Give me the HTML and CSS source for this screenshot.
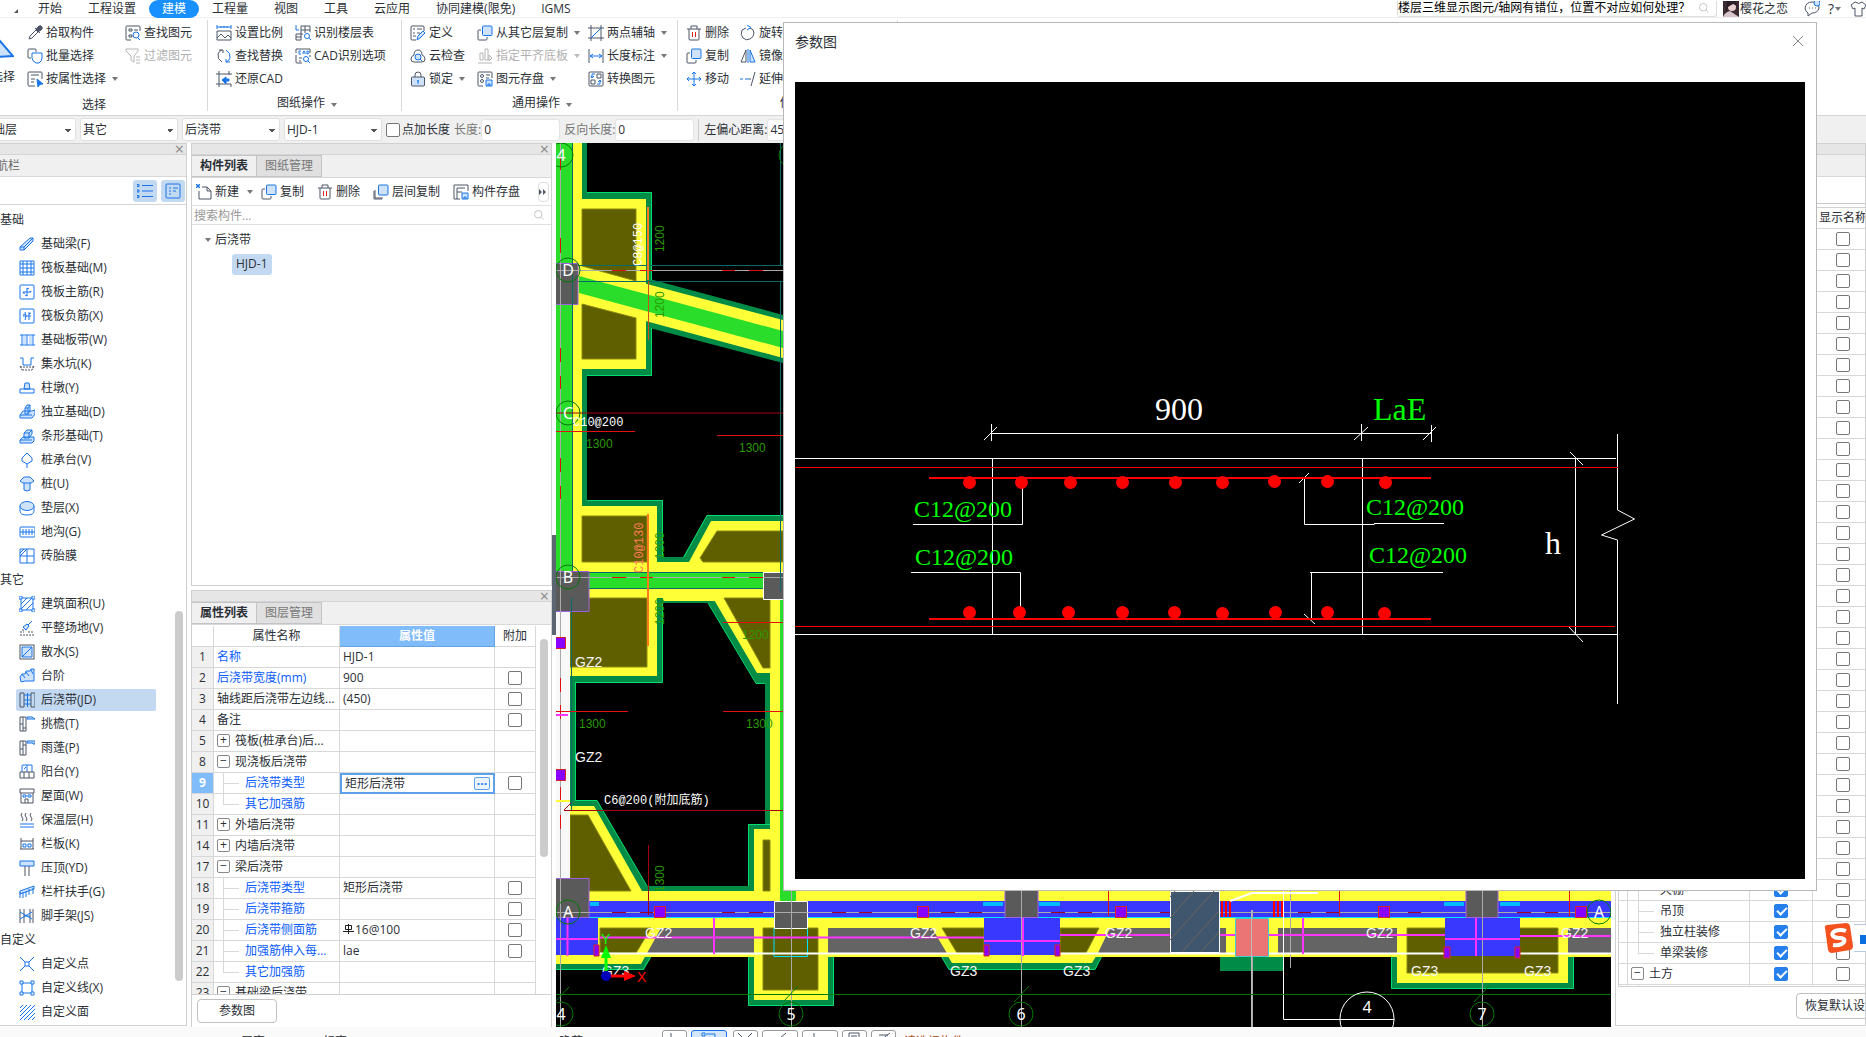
FILE: index.html
```html
<!DOCTYPE html>
<html lang="zh-CN">
<head>
  <meta charset="UTF-8">
  <title>参数图</title>
  <link rel="stylesheet" href="styles.css">
</head>
<body>
  <!-- icon sprite -->
  <svg class="sprite" aria-hidden="true">
    <symbol id="i-pick" viewBox="0 0 16 16"><path class="k" d="M2 14l1-3 6-6 2 2-6 6zM8 3l5 5" /><path class="kf" d="M9 4l3-3q2-1 3 1t-1 3l-3 2z"/></symbol>
    <symbol id="i-batch" viewBox="0 0 16 16"><path class="k" d="M9 4V2q0-1-1-1H2Q1 1 1 2v7q0 1 1 1h2"/><path d="M9 15q-4-2-4-5V5h10v5q0 3-3 5z"/></symbol>
    <symbol id="i-attr" viewBox="0 0 16 16"><path class="k" d="M15 8V2q0-1-1-1H2Q1 1 1 2v12q0 1 1 1h6M4 4h8M4 8h4M4 11h3"/><path class="b" d="M10 8l6 5-3 .3L11 16z"/></symbol>
    <symbol id="i-find" viewBox="0 0 16 16"><path class="k" d="M15 6V2q0-1-1-1H2Q1 1 1 2v12q0 1 1 1h4M4 4h3v2H4zM4 10h3v2H4zM9 5h4"/><circle cx="11" cy="10" r="3"/><path d="M13 13l2 2"/></symbol>
    <symbol id="i-filter" viewBox="0 0 16 16"><path class="g" d="M1 1h12v2L9 8v6l-3-2V8L1 3zM11 9h4M11 12h4M11 15h4"/></symbol>
    <symbol id="i-scale" viewBox="0 0 16 16"><path d="M1 0v4M15 0v4M1 2h14M5 1v2M8 1v2M11 1v2"/><path class="k" d="M1 6h14v9H1zM1 13l4-4 4 4 3-3 3 3"/></symbol>
    <symbol id="i-floor" viewBox="0 0 16 16"><path d="M1 0v5h3"/><path class="k" d="M6 1h9v6M6 1v14H1V9h7M10 1v7M6 5h9M1 12h5"/><circle cx="12" cy="11" r="2.5"/><path d="M14 13l2 2"/></symbol>
    <symbol id="i-replace" viewBox="0 0 16 16"><path class="k" d="M6 14Q1 11 2 6q1-3 4-4M3 2h4v3"/><path d="M10 2q5 3 4 8-1 3-4 4M14 14h-4v-3"/></symbol>
    <symbol id="i-cadopt" viewBox="0 0 16 16"><path class="k" d="M1 7v7q0 1 1 1h5M15 7v2M4 10h3M4 13h2M1 5V1h14v4"/><path d="M6 3H4v3h2M8 6V4l1-1 1 1v2M12 3v3q2 0 2-1.500T12 3"/><circle cx="11" cy="11" r="2.500"/><path d="M13 13l2 2"/></symbol>
    <symbol id="i-cad" viewBox="0 0 16 16"><path class="k" d="M3 0v16M0 3h16M13 0v4M0 13h15v3"/><path class="b" d="M6 9l4-3v2h3v2h-3v3z"/></symbol>
    <symbol id="i-define" viewBox="0 0 16 16"><path class="k" d="M14 6V2q0-1-1-1H2Q1 1 1 2v12q0 1 1 1h4M3 4h2M7 4h5M3 8h2M7 8h3M3 11h3"/><path class="f" d="M7 15l1-4 5-5 2 2-5 5z"/></symbol>
    <symbol id="i-cloud" viewBox="0 0 16 16"><path class="k" d="M4 14q-3 0-3-3t3-4q0-5 4-5t4 5q3 1 3 4t-3 3z"/><circle class="f" cx="8" cy="9" r="3"/><path d="M10 11l2 2"/></symbol>
    <symbol id="i-lock" viewBox="0 0 16 16"><path class="k" d="M5 6V4q0-3 3-3t3 3v2"/><rect class="k f" x="1.500" y="6" width="13" height="9" rx="1"/><path d="M8 9v4M7 10h2"/></symbol>
    <symbol id="i-copy" viewBox="0 0 16 16"><path class="k" d="M4 5H2Q1 5 1 6v8q0 1 1 1h7q1 0 1-1v-2"/><rect class="f" x="5.500" y="1" width="9.500" height="9.500" rx="1"/></symbol>
    <symbol id="i-align" viewBox="0 0 16 16"><path class="g" d="M1 15h14M3 5h3v7H3zM8 1h3v11H8zM12 7l3 3-3 3z"/></symbol>
    <symbol id="i-store" viewBox="0 0 16 16"><path class="k" d="M15 7V2q0-1-1-1H2Q1 1 1 2v12q0 1 1 1h4M9 4h4M9 7h3"/><circle class="k" cx="5" cy="5" r="1.500"/><circle class="k" cx="5" cy="10" r="1.500"/><path class="f" d="M9 9h6v6H9zM11 15v-2h2v2"/></symbol>
    <symbol id="i-axis" viewBox="0 0 16 16"><path class="k" d="M3 0v16M13 0v16M0 3h16M0 13h16"/><path d="M3 13L13 3"/></symbol>
    <symbol id="i-dim" viewBox="0 0 16 16"><path class="k" d="M1 1v14M15 1v14"/><path d="M2 8h12M5 6L2 8l3 2M11 6l3 2-3 2"/></symbol>
    <symbol id="i-conv" viewBox="0 0 16 16"><rect class="k" x="1" y="1" width="14" height="14" rx="1"/><path class="k" d="M9 3h4v4H9zM3 9h4v4H3z"/><path d="M7 3H4v4M3 5l1 2 2-2M9 13h3V9M10 11l2-2 1 2"/></symbol>
    <symbol id="i-del" viewBox="0 0 16 16"><path class="k" d="M1 4h14M5 4V1h6v3M3 4v10q0 1 1 1h8q1 0 1-1V4"/><path class="r" d="M6.500 7v5M9.500 7v5"/></symbol>
    <symbol id="i-move" viewBox="0 0 16 16"><path d="M8 1v14M1 8h14M6 3l2-2 2 2M6 13l2 2 2-2M3 6L1 8l2 2M13 6l2 2-2 2"/></symbol>
    <symbol id="i-rot" viewBox="0 0 16 16"><path class="k" d="M10 3q4 1 4 5t-4 6-7-1-1-8l4-2"/><path d="M7 0l4 2.500L7 5"/></symbol>
    <symbol id="i-mirror" viewBox="0 0 16 16"><path class="k" d="M6 2v12H1z"/><path class="f" d="M10 2v12h5zM8 1v14"/></symbol>
    <symbol id="i-extend" viewBox="0 0 16 16"><path d="M0 8h3M5 8h4"/><path class="k" d="M9 8h2M15 1l-4 14"/></symbol>
    <symbol id="i-new" viewBox="0 0 16 16"><path class="k" d="M6 3h5l4 4v8H3V7M11 3v4h4"/><path d="M0 0l4 4M4 0L0 4M2 0v4M0 2h4"/></symbol>
    <symbol id="i-layers" viewBox="0 0 16 16"><path class="k" d="M2 6v8h8M1 7v8h8"/><rect class="f" x="5.500" y="1" width="9.500" height="10" rx="1"/></symbol>
    <symbol id="i-save" viewBox="0 0 16 16"><path class="k" d="M15 7V1H1v14h6M4 15V4h8M4 8h5"/><path class="f" d="M9 9h6v6H9zM11 15v-2h2v2"/></symbol>
    <symbol id="i-mag" viewBox="0 0 16 16"><circle class="g" cx="7" cy="7" r="5"/><path class="g" d="M11 11l3 3"/></symbol>
    <symbol id="i-list" viewBox="0 0 16 16"><path d="M5 2.500h11M5 8h11M5 13.500h11M0 1.500h2v2H0zM0 7h2v2H0zM0 12.500h2v2H0z"/></symbol>
    <symbol id="i-card" viewBox="0 0 16 16"><rect x="1" y="1" width="14" height="14" rx="1"/><path d="M4 5h2M8 5h5M4 8h2M8 8h3M4 11h2"/></symbol>

    <symbol id="n-beam" viewBox="0 0 16 16"><path class="f" d="M1 11L11 2l3 0v3L5 14H1zM1 11h4v3M5 11l9-9"/></symbol>
    <symbol id="n-raft" viewBox="0 0 16 16"><path d="M1 1h14v14H1zM4 1v14M8 1v14M12 1v14M1 4h14M1 8h14M1 12h14"/></symbol>
    <symbol id="n-main" viewBox="0 0 16 16"><rect x="1" y="1" width="14" height="14" rx="1"/><path d="M8 4v8M4 8h8M10 5q-2-2-2 0M4 8q0 2 2 1M12 8q0-2-1 0M6 11q2 2 2 0"/></symbol>
    <symbol id="n-neg" viewBox="0 0 16 16"><rect x="1" y="1" width="14" height="14" rx="1"/><path d="M4 8h8M6 4q2 4 0 8M10 4v8M6 6L4 7M10 6l2-1"/></symbol>
    <symbol id="n-strip" viewBox="0 0 16 16"><path d="M1 3h15M1 13h15M3 3v10M8 3v10M14 3v10"/><path class="f" d="M4 4h3v8H4zM10 4h3v8h-3z" stroke="none"/></symbol>
    <symbol id="n-pit" viewBox="0 0 16 16"><path d="M1 2h3v7h8V2h3"/><path class="k" stroke-dasharray="2 1" d="M1 11h15M3 14h10M1 10l2 4M15 10l-2 4"/></symbol>
    <symbol id="n-pier" viewBox="0 0 16 16"><path class="f" d="M6 3h4l1 6H5z"/><path d="M1 9h14v4H1z"/></symbol>
    <symbol id="n-iso" viewBox="0 0 16 16"><path class="f" d="M1 11l3-4h9l3-1v4l-3 4H1zM1 11h12M6 10V4l2-3h3v6l-2 3zM6 4h3v6M9 4l2-3"/></symbol>
    <symbol id="n-bar" viewBox="0 0 16 16"><path class="f" d="M1 12l3-3h11v4l-2 2H1zM1 12h12M5 10V5l3-3h5v4l-3 4zM5 5h5v5M10 5l3-3"/></symbol>
    <symbol id="n-cap" viewBox="0 0 16 16"><path d="M8 1l5 5v3l-5 3-5-3V6zM8 12v4"/></symbol>
    <symbol id="n-pile" viewBox="0 0 16 16"><path class="f" d="M5 7v7q3 2 6 0V7"/><path class="f" d="M1 5l4-4h6l4 4-3 2H4z"/></symbol>
    <symbol id="n-pad" viewBox="0 0 16 16"><path d="M1 6v5q0 4 7 4t7-4V6"/><ellipse class="f" cx="8" cy="6" rx="7" ry="4.500"/></symbol>
    <symbol id="n-ditch" viewBox="0 0 16 16"><rect x="1" y="3" width="15" height="10" rx="1"/><path d="M1 8h15M4 5v6M7 5v6M10 5v6M13 5v6"/></symbol>
    <symbol id="n-brick" viewBox="0 0 16 16"><path d="M1 1h14v14H1zM8 1v14M1 8h14M1 8l7-7M1 5l4-4"/></symbol>
    <symbol id="n-area" viewBox="0 0 16 16"><path d="M2 2h12v12H2zM2 8l6-6M2 13L13 2M7 14l7-7"/><path class="w" d="M0 0h3v3H0zM13 0h3v3h-3zM0 13h3v3H0zM13 13h3v3h-3z"/></symbol>
    <symbol id="n-level" viewBox="0 0 16 16"><path class="f" d="M4 7l3 3 3-4-2-2zM9 5l4-4"/><path class="k" stroke-dasharray="2 1" d="M1 12h4M3 10h2M1 15h14M9 12h5"/></symbol>
    <symbol id="n-apron" viewBox="0 0 16 16"><rect class="k" x="1" y="1" width="14" height="14"/><path class="f" d="M3 3h10v10H3zM3 13L13 3"/></symbol>
    <symbol id="n-step" viewBox="0 0 16 16"><path class="f" d="M1 9l2-3h3l1-3h4l1-2h3v12H6l-4 1zM3 6l3 4M7 4l3 4M12 2l2 4"/></symbol>
    <symbol id="n-post" viewBox="0 0 16 16"><path class="k" d="M1 1h4v14H1zM12 1h4v14h-4z"/><path d="M5 3h7M5 8h7M5 12h7M8.500 1v14"/></symbol>
    <symbol id="n-eave" viewBox="0 0 16 16"><path class="k" d="M1 1h6v14H1zM4 1v14M1 8h3M4 12h3"/><path class="f" d="M8 1h5l3 2H8z"/></symbol>
    <symbol id="n-canopy" viewBox="0 0 16 16"><path class="k" d="M1 1h6v14H1zM4 1v14M1 9h3M4 5h3"/><path class="f" d="M8 1h8v3h-2V3H8z"/></symbol>
    <symbol id="n-balcony" viewBox="0 0 16 16"><path d="M3 8V2q0-1 1-1h9v7M8 1v7M5 5l2-2"/><path class="k" d="M1 8h14v6H1zM5 8v6M10 8v6"/></symbol>
    <symbol id="n-roof" viewBox="0 0 16 16"><path class="k" d="M1 1h14v4H1zM2 5v10h12V5M6 15v-4h3v4"/><path d="M4 7h3v2H4zM9 7h3v2H9z"/></symbol>
    <symbol id="n-heat" viewBox="0 0 16 16"><path class="k" d="M3 1q-2 2 0 4t0 4M7 1q-2 2 0 4t0 4M12 1q-2 2 0 4t0 4"/><path d="M1 12h14M1 15h14"/></symbol>
    <symbol id="n-rail" viewBox="0 0 16 16"><path class="k" d="M2 2v11M14 2v11M2 5h12M1 13h14"/><path d="M4 8h3v3H4zM9 8h3v3H9z"/></symbol>
    <symbol id="n-top" viewBox="0 0 16 16"><path class="f" d="M1 1h14v5H1z"/><path class="k" d="M6 6v10M10 6v10"/></symbol>
    <symbol id="n-hand" viewBox="0 0 16 16"><path class="f" d="M1 7l14-5v3L1 10zM1 8v6M4 8v6M7 7v6M10 5v6M14 4v6"/></symbol>
    <symbol id="n-scaf" viewBox="0 0 16 16"><path class="k" d="M1 1v14M5 1v14M11 1v14M14 1v14"/><path d="M1 4l12 7M1 11l12-7M5 8h6"/></symbol>
    <symbol id="n-pt" viewBox="0 0 16 16"><path d="M1 1l5 5M15 1l-5 5M1 15l5-5M15 15l-5-5M6 6h4v4H6z"/></symbol>
    <symbol id="n-line" viewBox="0 0 16 16"><path d="M3 3h10v10H3z"/><path class="w" d="M1 1h3v3H1zM12 1h3v3h-3zM1 12h3v3H1zM12 12h3v3h-3z"/></symbol>
    <symbol id="n-face" viewBox="0 0 16 16"><path d="M1 4l3-3M1 8l7-7M1 12L12 1M1 16L16 1M5 16L16 5M9 16l7-7M13 16l3-3"/></symbol>
  </svg>

  <header class="menu">
    <span class="corner"></span>
    <nav class="menu-items">
      <a href="#">开始</a><a href="#">工程设置</a><a href="#" class="active">建模</a><a href="#">工程量</a><a href="#">视图</a><a href="#">工具</a><a href="#">云应用</a><a href="#">协同建模(限免)</a><a href="#">IGMS</a>
    </nav>
    <div class="help-search">
      <input type="text" aria-label="搜索帮助" value="楼层三维显示图元/轴网有错位，位置不对应如何处理？">
      <svg class="ico mag"><use href="#i-mag"/></svg>
    </div>
    <svg class="avatar" viewBox="0 0 16 16"><rect width="16" height="16" fill="#3c2a33"/><circle cx="9" cy="6" r="4" fill="#e8cfd0"/><path d="M0 16q2-5 7-6l9 6z" fill="#d9c4c9"/><path d="M4 0h9l1 5-4-2-5 3-2 6z" fill="#2b1c26"/></svg>
    <a href="#" class="user">樱花之恋</a>
    <button class="flat" aria-label="消息"><svg class="ico"><path class="k" d="M4 12q-3-2-3-5 1-6 7-6 7 0 7 6-1 5-7 5l-4 3z"/><path class="k" d="M5 7h1M8 7h1M11 7h1"/><circle class="f" cx="13" cy="2" r="3"/></svg></button>
    <button class="flat help" aria-label="帮助">?<span class="caret"></span></button>
    <button class="flat" aria-label="皮肤"><svg class="ico"><path class="k" d="M5 1L1 4l2 4 2-1v8h7V7l2 1 2-4-4-3q-3 3-7 0z"/></svg></button>
  </header>

  <div class="ribbon">
    <section class="group g-select">
      <button class="big"><svg class="arrow"><path class="f" d="M-6 18L0 2l13 15z"/></svg><span>选择</span></button>
      <div class="tools">
        <button><svg class="ico"><use href="#i-pick"/></svg>拾取构件</button>
        <button><svg class="ico"><use href="#i-find"/></svg>查找图元</button>
        <button><svg class="ico"><use href="#i-batch"/></svg>批量选择</button>
        <button disabled><svg class="ico"><use href="#i-filter"/></svg>过滤图元</button>
        <button><svg class="ico"><use href="#i-attr"/></svg>按属性选择<span class="caret"></span></button>
      </div>
      <h2>选择</h2>
    </section>
    <section class="group g-draw">
      <div class="tools">
        <button><svg class="ico"><use href="#i-scale"/></svg>设置比例</button>
        <button><svg class="ico"><use href="#i-floor"/></svg>识别楼层表</button>
        <button><svg class="ico"><use href="#i-replace"/></svg>查找替换</button>
        <button><svg class="ico"><use href="#i-cadopt"/></svg>CAD识别选项</button>
        <button><svg class="ico"><use href="#i-cad"/></svg>还原CAD</button>
      </div>
      <h2>图纸操作<span class="caret"></span></h2>
    </section>
    <section class="group g-common">
      <div class="tools">
        <button><svg class="ico"><use href="#i-define"/></svg>定义</button>
        <button><svg class="ico"><use href="#i-copy"/></svg>从其它层复制<span class="caret"></span></button>
        <button><svg class="ico"><use href="#i-axis"/></svg>两点辅轴<span class="caret"></span></button>
        <button><svg class="ico"><use href="#i-cloud"/></svg>云检查</button>
        <button disabled><svg class="ico"><use href="#i-align"/></svg>指定平齐底板<span class="caret"></span></button>
        <button><svg class="ico"><use href="#i-dim"/></svg>长度标注<span class="caret"></span></button>
        <button><svg class="ico"><use href="#i-lock"/></svg>锁定<span class="caret"></span></button>
        <button><svg class="ico"><use href="#i-store"/></svg>图元存盘<span class="caret"></span></button>
        <button><svg class="ico"><use href="#i-conv"/></svg>转换图元</button>
      </div>
      <h2>通用操作<span class="caret"></span></h2>
    </section>
    <section class="group g-edit">
      <div class="tools">
        <button><svg class="ico"><use href="#i-del"/></svg>删除</button>
        <button><svg class="ico"><use href="#i-rot"/></svg>旋转</button>
        <button><svg class="ico"><use href="#i-copy"/></svg>复制</button>
        <button><svg class="ico"><use href="#i-mirror"/></svg>镜像</button>
        <button><svg class="ico"><use href="#i-move"/></svg>移动</button>
        <button><svg class="ico"><use href="#i-extend"/></svg>延伸</button>
      </div>
      <h2>修改</h2>
    </section>
  </div>

  <div class="options">
    <select class="floor" aria-label="楼层"><option>基础层</option></select>
    <select aria-label="分类"><option>其它</option></select>
    <select aria-label="构件类型"><option>后浇带</option></select>
    <select aria-label="构件"><option>HJD-1</option></select>
    <label class="opt-check"><input type="checkbox">点加长度</label>
    <label class="dim">长度:<input type="text" value="0"></label>
    <label class="dim">反向长度:<input type="text" value="0"></label>
    <label class="offset">左偏心距离:<input type="text" value="450"></label>
  </div>

  <main>
    <aside class="panel nav">
      <div class="strip"><button class="x" aria-label="关闭">×</button></div>
      <h3 class="nav-title">导航栏</h3>
      <div class="nav-tools">
        <button aria-label="列表"><svg class="ico"><use href="#i-list"/></svg></button>
        <button aria-label="卡片"><svg class="ico"><use href="#i-card"/></svg></button>
      </div>
      <ul class="nav-list">
        <li>基础</li>
        <li><a href="#"><svg class="ico"><use href="#n-beam"/></svg>基础梁(F)</a></li>
        <li><a href="#"><svg class="ico"><use href="#n-raft"/></svg>筏板基础(M)</a></li>
        <li><a href="#"><svg class="ico"><use href="#n-main"/></svg>筏板主筋(R)</a></li>
        <li><a href="#"><svg class="ico"><use href="#n-neg"/></svg>筏板负筋(X)</a></li>
        <li><a href="#"><svg class="ico"><use href="#n-strip"/></svg>基础板带(W)</a></li>
        <li><a href="#"><svg class="ico"><use href="#n-pit"/></svg>集水坑(K)</a></li>
        <li><a href="#"><svg class="ico"><use href="#n-pier"/></svg>柱墩(Y)</a></li>
        <li><a href="#"><svg class="ico"><use href="#n-iso"/></svg>独立基础(D)</a></li>
        <li><a href="#"><svg class="ico"><use href="#n-bar"/></svg>条形基础(T)</a></li>
        <li><a href="#"><svg class="ico"><use href="#n-cap"/></svg>桩承台(V)</a></li>
        <li><a href="#"><svg class="ico"><use href="#n-pile"/></svg>桩(U)</a></li>
        <li><a href="#"><svg class="ico"><use href="#n-pad"/></svg>垫层(X)</a></li>
        <li><a href="#"><svg class="ico"><use href="#n-ditch"/></svg>地沟(G)</a></li>
        <li><a href="#"><svg class="ico"><use href="#n-brick"/></svg>砖胎膜</a></li>
        <li>其它</li>
        <li><a href="#"><svg class="ico"><use href="#n-area"/></svg>建筑面积(U)</a></li>
        <li><a href="#"><svg class="ico"><use href="#n-level"/></svg>平整场地(V)</a></li>
        <li><a href="#"><svg class="ico"><use href="#n-apron"/></svg>散水(S)</a></li>
        <li><a href="#"><svg class="ico"><use href="#n-step"/></svg>台阶</a></li>
        <li><a href="#" class="active"><svg class="ico"><use href="#n-post"/></svg>后浇带(JD)</a></li>
        <li><a href="#"><svg class="ico"><use href="#n-eave"/></svg>挑檐(T)</a></li>
        <li><a href="#"><svg class="ico"><use href="#n-canopy"/></svg>雨蓬(P)</a></li>
        <li><a href="#"><svg class="ico"><use href="#n-balcony"/></svg>阳台(Y)</a></li>
        <li><a href="#"><svg class="ico"><use href="#n-roof"/></svg>屋面(W)</a></li>
        <li><a href="#"><svg class="ico"><use href="#n-heat"/></svg>保温层(H)</a></li>
        <li><a href="#"><svg class="ico"><use href="#n-rail"/></svg>栏板(K)</a></li>
        <li><a href="#"><svg class="ico"><use href="#n-top"/></svg>压顶(YD)</a></li>
        <li><a href="#"><svg class="ico"><use href="#n-hand"/></svg>栏杆扶手(G)</a></li>
        <li><a href="#"><svg class="ico"><use href="#n-scaf"/></svg>脚手架(JS)</a></li>
        <li>自定义</li>
        <li><a href="#"><svg class="ico"><use href="#n-pt"/></svg>自定义点</a></li>
        <li><a href="#"><svg class="ico"><use href="#n-line"/></svg>自定义线(X)</a></li>
        <li><a href="#"><svg class="ico"><use href="#n-face"/></svg>自定义面</a></li>
      </ul>
      <div class="thumb"></div>
    </aside>

    <div class="middle">
      <section class="panel components">
        <div class="strip"><button class="x" aria-label="关闭">×</button></div>
        <div class="tabs"><button class="on">构件列表</button><button>图纸管理</button></div>
        <div class="bar">
          <button><svg class="ico"><use href="#i-new"/></svg>新建<span class="caret"></span></button>
          <button><svg class="ico"><use href="#i-copy"/></svg>复制</button>
          <button><svg class="ico"><use href="#i-del"/></svg>删除</button>
          <button><svg class="ico"><use href="#i-layers"/></svg>层间复制</button>
          <button><svg class="ico"><use href="#i-save"/></svg>构件存盘</button>
          <button class="more" aria-label="更多"><svg viewBox="0 0 8 6"><path d="M0 0l3 3-3 3zM4 0l3 3-3 3z"/></svg></button>
        </div>
        <div class="search"><input type="text" aria-label="搜索构件" placeholder="搜索构件..."><svg class="ico mag"><use href="#i-mag"/></svg></div>
        <ul class="tree">
          <li><span class="caret"></span>后浇带
            <ul><li><span class="picked">HJD-1</span></li></ul>
          </li>
        </ul>
      </section>

      <section class="panel props">
        <div class="strip"><button class="x" aria-label="关闭">×</button></div>
        <div class="tabs"><button class="on">属性列表</button><button>图层管理</button></div>
        <div class="prop-scroll">
          <table class="grid">
            <colgroup><col class="c-no"><col class="c-name"><col class="c-val"><col class="c-add"></colgroup>
            <thead><tr><th></th><th>属性名称</th><th class="cur">属性值</th><th>附加</th></tr></thead>
            <tbody>
              <tr><th>1</th><td class="blue">名称</td><td>HJD-1</td><td></td></tr>
              <tr><th>2</th><td class="blue">后浇带宽度(mm)</td><td>900</td><td><input type="checkbox" aria-label="附加 2"></td></tr>
              <tr><th>3</th><td>轴线距后浇带左边线...</td><td>(450)</td><td><input type="checkbox" aria-label="附加 3"></td></tr>
              <tr><th>4</th><td>备注</td><td></td><td><input type="checkbox" aria-label="附加 4"></td></tr>
              <tr><th>5</th><td><button class="exp">+</button>筏板(桩承台)后...</td><td></td><td></td></tr>
              <tr><th>8</th><td><button class="exp">−</button>现浇板后浇带</td><td></td><td></td></tr>
              <tr class="sel"><th>9</th><td class="blue leaf">后浇带类型</td><td class="edit"><div><input type="text" aria-label="后浇带类型" value="矩形后浇带"><button aria-label="选择类型">···</button></div></td><td><input type="checkbox" aria-label="附加 9"></td></tr>
              <tr><th>10</th><td class="blue leaf last">其它加强筋</td><td></td><td></td></tr>
              <tr><th>11</th><td><button class="exp">+</button>外墙后浇带</td><td></td><td></td></tr>
              <tr><th>14</th><td><button class="exp">+</button>内墙后浇带</td><td></td><td></td></tr>
              <tr><th>17</th><td><button class="exp">−</button>梁后浇带</td><td></td><td></td></tr>
              <tr><th>18</th><td class="blue leaf">后浇带类型</td><td>矩形后浇带</td><td><input type="checkbox" aria-label="附加 18"></td></tr>
              <tr><th>19</th><td class="blue leaf">后浇带箍筋</td><td></td><td><input type="checkbox" aria-label="附加 19"></td></tr>
              <tr><th>20</th><td class="blue leaf">后浇带侧面筋</td><td><svg class="rebar" viewBox="0 0 11 10"><path d="M5.500 0v10M2.500 1.500h6v4h-6zM0 7.500h11"/></svg>16@100</td><td><input type="checkbox" aria-label="附加 20"></td></tr>
              <tr><th>21</th><td class="blue leaf">加强筋伸入每...</td><td>lae</td><td><input type="checkbox" aria-label="附加 21"></td></tr>
              <tr><th>22</th><td class="blue leaf last">其它加强筋</td><td></td><td></td></tr>
              <tr><th>23</th><td><button class="exp">−</button>基础梁后浇带</td><td></td><td></td></tr>
            </tbody>
          </table>
          <div class="thumb"></div>
        </div>
        <div class="foot"><button class="btn">参数图</button></div>
      </section>
      <div class="handle"></div>
    </div>

    <!-- model canvas -->
    <svg class="plan" viewBox="556 143 1055 884" preserveAspectRatio="xMinYMin slice">
      <rect x="556" y="143" width="1055" height="884" fill="#000"/>
      <g class="dg">
        <path d="M582 143h5v49h65v184h-65v124h76v62h-81z"/>
        <path d="M646 278l137 37v48l-137-36zM683 557l24-42h76v47H657v-5z"/>
        <path d="M570 598h93v84h-93zM570 598h6v212h-6zM657 588h126v241h-18V683h-9L708 603h-51z"/>
        <path d="M570 800h27l50 86h101v-62h35v77H570z"/>
        <path d="M556 954h97l-9 16h-88zM748 954h86v52h-86zM940 954h163l-8 16H949zM1220 954h64v17h-64zM1391 954h183v35h-183z"/>
      </g>
      <path class="edge" d="M587 192.500h64.500V280M651.500 328v47.500H587M587 500.500h75.500V557M684 557l23-41.500h76M576 682.500h86.500V604M575.500 682v118.500H597l50 85.500M708 603l48 80.500h9M770 824.500h-21.500V886M556 969.500h87l9-15M748.500 954v51.500h85V954M940 954l9 15.500h146l8-15.500M1391.500 954v34.500h182V954"/>
      <g class="ye">
        <path d="M572 143h10v56h64v170h-64v137h75v56h126v39H663v-3h-6v78h-87v-78h2z"/>
        <path d="M579 266l204 54v38l-204-55zM689 562l22-41h72v45H686z"/>
        <path d="M713 598h67v303H570v-95h24l48 85h112v-62h16V673h-13z"/>
        <path d="M796 891h815v66H556v-39h208v-27z"/>
        <path d="M556 955h90l-5 9h-85zM754 928h74v72h-74zM946 953h152l-6 10H952zM1397 928h171v55h-171z"/>
      </g>
      <g class="ol">
        <path d="M582 209h54v72l-54-15zM582 304l54 14v41h-54zM582 516h65v46h-65zM703 562l-3-4 17-27h66v31z"/>
        <path d="M570 598h77v69h-77zM724 598h46v70h-7zM763 840h7v51h-7zM570 815h18l43 76h-61z"/>
      </g>
      <path class="gy" d="M600 928h154v25H600zM828 928h342v25H828zM1278 928h119v25h-119zM1568 928h43v25h-43zM1219 928h7v25h-7z"/>
      <path class="ye" d="M651 928h10l-15 27h-11zM932 928h178l-13 27H948zM1226 928h10v27h-10zM1268 928h10v27h-10z"/>
      <path class="ol" d="M600 928h51l-15 25h-36zM763 928h55v62h-55zM942 928h42v25h-27zM1060 928h39l-13 25h-26zM1407 928h151v45h-151z"/>
      <path class="gr" d="M556 143h16v429h-16zM579 276l204 55v17l-204-55zM589 572h174v16H589zM780 598h3v293h-3zM780 891h16v10h-16z"/>
      <path fill="#f8f8f8" d="M556 611h14v267h-14z"/>
      <path class="bl" d="M589 901h1022v16H589zM556 918h42v37h-42zM984 918h76v37h-76zM1445 918h75v38h-75z"/>
      <path fill="#00baff" d="M590 902h9v4h-9zM983 902h20v4h-20zM1039 902h21v4h-21zM1444 902h20v4h-20zM1500 902h20v4h-20z"/>
      <path stroke="#00e0ff" fill="none" d="M589 917.500h1022M807.500 928v28.500H774V928"/>
      <g class="col">
        <path d="M556 263.500h22v41h-22M556 571.500h33v40h-33M556 878.500h33v39h-33M1005 891v26.500h33V891M1466 891v26.500h32V891"/>
        <path stroke="#fff" d="M783 572.500h-19.500v27H783M774.500 901.500h33v27h-33z"/>
      </g>
      <g class="ax">
        <path d="M560.500 143v884M556 270.500h227M556 577.500h227M556 912.500h449M1038 912.500h428M1498 912.500h113M791.500 891v136M1021.500 891v136M1252.500 910v117M1482.500 891v136M1290.500 891v77"/>
      </g>
      <path stroke="#fff" stroke-width="2" fill="none" d="M600 953.500h384M1060 953.500h385M1520 953.500h91"/>
      <path class="teal" d="M578 265.500h205M578 281.500h205M780.500 143v122M780.500 281v310M572.500 143v428M589 572.500h174M589 588.500h174M571.500 598v212"/>
      <path class="red" d="M560.500 158v12M560.500 238v15M560.500 348v14M560.500 376v13M560.500 458v14M560.500 486v13M560.500 678v14M560.500 705v14M560.500 787v14M560.500 815v14M612 270.500h14M640 270.500h13M722 270.500h13M749 270.500h14M612 577.500h14M640 577.500h13M722 577.500h13M749 577.500h14"/>
      <path class="dred" d="M612 912.500h14M640 912.500h13M722 912.500h13M749 912.500h14M832 912.500h14M859 912.500h13M941 912.500h14M969 912.500h13M1051 912.500h14M1078 912.500h14M1160 912.500h10M1298 912.500h13M1326 912.500h13M1408 912.500h13M1517 912.500h14M1545 912.500h13"/>
      <path class="dred" d="M556 413h227M564 810.500h219M564 810l7-7M648.500 845v70"/>
      <path class="red" d="M556 431.500h79M717 435.500h66M556 711.500h72M723 711.500h60M723 622.500h60M1108.500 891v25M1339.500 891v25M1569.500 891v25"/>
      <path stroke="#ff7a1a" stroke-width="2" d="M648 207v73M648 514v132"/>
      <path stroke="#c8501a" d="M648.500 281v59"/>
      <g class="mg">
        <path d="M556 939h42M600 937.500h384M984 941h76M1060 935h385M1445 939h75M1520 936h91M567.500 918v38M714 918v36M1023 918v38M1303 918v36M1476 918v38M556 715h12"/>
      </g>
      <path stroke="#ff3" stroke-width="2" d="M556 801h14"/>
      <g class="pu">
        <path d="M553.500 637.500h12v11h-12zM553.500 769.500h12v11h-12zM654.500 906.500h11v11h-11zM917.500 906.500h11v11h-11zM1115.500 906.500h11v11h-11zM1378.500 906.500h11v11h-11zM1575.500 906.500h11v11h-11zM594 945h5v11h-5zM984 945h5v11h-5zM1055 945h5v11h-5zM1444 947h6v11h-6zM1515 947h5v11h-5z"/>
      </g>
      <path fill="#40566e" stroke="#fff" d="M1170.500 891.500h49v61h-49z"/>
      <path stroke="#6b665c" fill="none" d="M1170 897l5-6M1170 918l24-27M1170 940l44-49M1182 952l37-41M1201 952l18-20"/>
      <path stroke="#f00" stroke-width="2" d="M1222 901v16M1226 901v16M1230 901v16M1274 901v16M1278 901v16M1282 901v16"/>
      <path stroke="#fff" stroke-width="2" fill="none" d="M1230 901l22-8h66"/>
      <path fill="#eb7474" stroke="#4cc" d="M1235.500 918.500h33v38h-33z"/>
      <path stroke="#bbb" d="M1251.500 910v117"/>
      <path stroke="#fff" fill="none" d="M1283.500 891v128.500h111"/>
      <path class="grid-green" d="M556 994.500h1055M554 1003l15-16M784 1001l14-15M1014 1002l15-16M1474 1002l15-16"/>
      <g class="grid-green">
        <circle cx="561" cy="155" r="12"/><circle cx="791" cy="155" r="12"/><circle cx="568" cy="270" r="12"/><circle cx="568" cy="413" r="12"/><circle cx="568" cy="577" r="12"/><circle cx="568" cy="912" r="12"/>
        <circle cx="561" cy="1014" r="12"/><circle cx="791" cy="1014" r="12"/><circle cx="1021" cy="1014" r="12"/><circle cx="1482" cy="1014" r="12"/><circle cx="1599" cy="912" r="12"/>
      </g>
      <circle cx="1367" cy="1019" r="27" fill="none" stroke="#fff"/>
      <g class="mark">
        <text x="561" y="161">4</text><text x="568" y="276">D</text><text x="568" y="419">C</text><text x="568" y="583">B</text><text x="568" y="918">A</text><text x="1599" y="918">A</text>
        <text x="561" y="1020">4</text><text x="791" y="1020">5</text><text x="1021" y="1020">6</text><text x="1482" y="1020">7</text><text class="tall" x="1367" y="1013">4</text>
      </g>
      <g class="note">
        <text x="573" y="426">C10@200</text><text x="604" y="804">C6@200(附加底筋)</text>
        <text transform="translate(642 266) rotate(-90)">C8@150</text>
        <text class="salmon" transform="translate(643 573) rotate(-90)">C10@130</text>
      </g>
      <g class="len">
        <text x="586" y="448">1300</text><text x="739" y="452">1300</text><text x="579" y="728">1300</text><text x="746" y="728">1300</text><text x="742" y="639">1200</text>
        <text transform="translate(664 252) rotate(-90)">1200</text><text transform="translate(664 318) rotate(-90)">1200</text><text transform="translate(664 559) rotate(-90)">1200</text><text transform="translate(664 625) rotate(-90)">1200</text><text transform="translate(664 892) rotate(-90)">1300</text>
      </g>
      <g class="tag">
        <text x="575" y="667">GZ2</text><text x="575" y="762">GZ2</text><text x="645" y="938">GZ2</text><text x="910" y="938">GZ2</text><text x="1105" y="938">GZ2</text><text x="1366" y="938">GZ2</text><text x="1561" y="938">GZ2</text>
        <text x="602" y="976">GZ3</text><text x="950" y="976">GZ3</text><text x="1063" y="976">GZ3</text><text x="1411" y="976">GZ3</text><text x="1524" y="976">GZ3</text>
      </g>
      <!-- axis gizmo -->
      <path stroke="#0f0" stroke-width="3" d="M606 976v-20"/><path fill="#0f0" d="M606 945l5 13h-10z"/>
      <path stroke="#f00" stroke-width="3" d="M606 976h20"/><path fill="#f00" d="M636 976l-12-5v10z"/>
      <circle cx="606" cy="976" r="5" fill="#00b"/>
      <text class="gizmo" x="601" y="944" fill="#0f0">Y</text><text class="gizmo" x="637" y="982" fill="#f00">X</text>
    </svg>

    <aside class="panel display">
      <div class="strip"></div>
      <div class="display-title"></div>
      <div class="display-space"></div>
      <div class="display-table">
        <table class="grid">
          <colgroup><col class="d-gut"><col class="d-name"><col class="d-on"><col class="d-label"></colgroup>
          <thead><tr><th></th><th></th><th></th><th>显示名称</th></tr></thead>
          <tbody id="layers"></tbody>
        </table>
      </div>
      <div class="foot"><button class="btn restore">恢复默认设置</button></div>
    </aside>
  </main>

  <footer class="status">
    <span class="s1">层高:</span><span class="s2">标高:</span><span class="s3">隐藏:</span>
    <button aria-label="正交"><svg class="ico"><path class="k" d="M4 2v14M4 9h12"/></svg></button>
    <button class="on" aria-label="捕捉"><svg class="ico"><path d="M1 2h3v3H1zM5 3h9v8"/></svg></button>
    <button aria-label="交点"><svg class="ico"><path class="k" d="M0 2l14 14M14 2L0 16"/></svg></button>
    <button class="wide" aria-label="垂点"><svg class="ico"><path class="k" d="M2 12L14 2"/></svg></button>
    <button class="wide" aria-label="中点"><svg class="ico"><path class="k" d="M2 2v12"/></svg></button>
    <button aria-label="顶点"><svg class="ico"><path class="k" d="M2 2h10v12H2zM4 5h6"/></svg></button>
    <button aria-label="坐标"><svg class="ico"><path class="k" d="M1 12L14 2M3 4h9"/></svg></button>
    <span class="hint">请选择构件</span>
  </footer>

  <div class="dialog" role="dialog" aria-labelledby="dlgTitle">
    <div class="dialog-head">
      <h1 id="dlgTitle">参数图</h1>
      <button aria-label="关闭"><svg viewBox="0 0 12 12"><path d="M1 1l10 10M11 1L1 11"/></svg></button>
    </div>
    <svg class="detail" viewBox="795 82 1010 797" preserveAspectRatio="xMidYMid meet">
      <g class="wl">
        <path d="M991 433.500h441M991.500 424v17M1361.500 424v17M1431.500 425v17M984 440l13-13M1354 440l14-13M1423 440l13-13"/>
        <path d="M795 458.500h821M795 634.500h822M992.500 458v176M1362.500 458v176"/>
        <path d="M1022.500 488v36.500H913M1304.500 478v46.500h70M1374 523.500h70M1299 483l10-10"/>
        <path d="M911 572.500h109.500V607M1443 572.500h-133M1311.500 572v47M1304 614l11 10"/>
        <path d="M1575.500 458v176M1570 452l13 13M1569 627l14 15"/>
        <path d="M1617.500 434v76l17 9-33 16 16 5v164"/>
      </g>
      <path stroke="#f00" d="M795 467.500h823M795 626.500h820"/>
      <path stroke="#f00" stroke-width="2" d="M929 478h502M929 619h502"/>
      <g fill="#f00">
        <circle cx="969.500" cy="482.500" r="6.500"/><circle cx="1021.500" cy="482.500" r="6.500"/><circle cx="1070.500" cy="482.500" r="6.500"/><circle cx="1122.500" cy="482.500" r="6.500"/><circle cx="1175.500" cy="482.500" r="6.500"/><circle cx="1222.500" cy="482.500" r="6.500"/><circle cx="1274.500" cy="481.500" r="6.500"/><circle cx="1327.500" cy="481.500" r="6.500"/><circle cx="1385.500" cy="482.500" r="6.500"/>
        <circle cx="969.500" cy="612.500" r="6.500"/><circle cx="1019.500" cy="612.500" r="6.500"/><circle cx="1068.500" cy="612.500" r="6.500"/><circle cx="1122.500" cy="612.500" r="6.500"/><circle cx="1174.500" cy="612.500" r="6.500"/><circle cx="1222.500" cy="613.500" r="6.500"/><circle cx="1275.500" cy="612.500" r="6.500"/><circle cx="1327.500" cy="612.500" r="6.500"/><circle cx="1384.500" cy="613.500" r="6.500"/>
      </g>
      <g class="spec">
        <text x="914" y="517">C12@200</text><text x="915" y="565">C12@200</text><text x="1366" y="515">C12@200</text><text x="1369" y="563">C12@200</text>
      </g>
      <text class="size" x="1155" y="420" fill="#fff">900</text>
      <text class="size" x="1373" y="420" fill="#0f0">LaE</text>
      <text class="size" x="1545" y="554" fill="#fff">h</text>
    </svg>
  </div>

  <div class="ime">
    <svg viewBox="0 0 32 32"><path fill="#f4511e" d="M3 6Q2 4 5 3l19-2q3 0 4 3l3 20q0 3-3 4L10 31q-3 0-4-3z"/><path fill="none" stroke="#fff" stroke-width="4" d="M24 9q-5-2-11 0-4 2-2 5 2 2 6 2 7 0 5 4-3 4-11 3"/></svg>
    <span class="ime-mode"></span>
  </div>

  <script>
    const layers = document.getElementById('layers');
    const named = ['天棚', '吊顶', '独立柱装修', '单梁装修'];

    function addRow(name, cls, checked, gutter) {
      const tr = document.createElement('tr');
      tr.innerHTML = `<td></td><td class="${cls}">${gutter || ''}${name}</td>
        <td><input type="checkbox" aria-label="显示图元" ${checked ? 'checked' : ''}></td>
        <td><input type="checkbox" aria-label="显示名称"></td>`;
      layers.appendChild(tr);
    }

    for (let i = 0; i < 31; i++) addRow('', 'leaf', true);
    named.forEach((name, i) => addRow(name, i === named.length - 1 ? 'leaf last' : 'leaf', true));
    addRow('土方', '', true, '<button class="exp">−</button>');
    addRow('', 'leaf', true);
  </script>
</body>
</html>
```

FILE: styles.css
```css
* {
  box-sizing: border-box;
}

body {
  margin: 0;
  height: 100vh;
  overflow: hidden;
  display: grid;
  grid-template-rows: 18px 98px 27px minmax(0, 1fr) 10px;
  background: #fff;
  color: #2b2f36;
  font: 12px/16px "Open Sans", "Noto Sans CJK SC", sans-serif;
}

button, input, select {
  font: inherit;
  color: inherit;
  margin: 0;
  padding: 0;
}

button {
  background: none;
  border: 0;
  white-space: nowrap;
}

a {
  color: inherit;
  text-decoration: none;
  white-space: nowrap;
}

h1, h2, h3, ul {
  margin: 0;
  padding: 0;
  font-size: 12px;
  font-weight: normal;
  list-style: none;
}

.sprite {
  position: absolute;
  width: 0;
  height: 0;
}

/* icons */
.ico {
  flex: none;
  width: 16px;
  height: 16px;
  fill: none;
  stroke: #1874e8;
}

.k { stroke: #4d5566; }
.kf { fill: #4d5566; stroke: #4d5566; }
.f { fill: #cfe2fb; }
.g { stroke: #b4b4b4; }
.b { fill: #1874e8; }
.r { stroke: #e02020; }
.w { fill: #fff; }

.caret {
  display: inline-block;
  border: 3px solid transparent;
  border-top: 4px solid #777;
  border-bottom: 0;
  margin-left: 8px;
}

input[type="checkbox"] {
  appearance: none;
  display: block;
  width: 14px;
  height: 14px;
  border: 1px solid #777;
  border-radius: 2px;
  background: #fff;
}

input[type="checkbox"]:checked {
  background: #2680eb;
  border-color: #2680eb;
}

input[type="checkbox"]:checked::after {
  content: "";
  display: block;
  width: 4px;
  height: 8px;
  margin: 0 4px;
  border: solid #fff;
  border-width: 0 2px 2px 0;
  transform: rotate(45deg);
}

/* menu bar */
.menu {
  display: flex;
  align-items: center;
  border-bottom: 1px solid #eee;
}

.corner {
  border: 2px solid transparent;
  border-right-color: #555;
  border-bottom-color: #555;
  margin: 4px 7px 0 14px;
}

.menu-items {
  display: flex;
  margin-right: auto;
}

.menu-items a {
  padding: 1px 13px;
}

.menu-items .active {
  background: #1890ff;
  color: #fff;
  border-radius: 9px;
}

.help-search {
  display: flex;
  align-items: center;
  width: 320px;
  height: 16px;
  border: 1px solid #ddd;
  border-top: 0;
  border-radius: 0 0 3px 3px;
  color: #000;
}

.help-search input {
  flex: 1;
  min-width: 0;
  border: 0;
  height: 15px;
}

.mag {
  width: 12px;
  height: 12px;
  margin-right: 6px;
}

.avatar {
  width: 16px;
  height: 16px;
  margin-left: 6px;
}

.user {
  margin: 0 16px 0 1px;
}

.flat {
  height: 16px;
}

.flat .ico {
  display: block;
}

.help {
  margin: 0 9px 0 8px;
  font-size: 14px;
  display: flex;
  align-items: center;
}

.help .caret {
  margin-left: 1px;
}

/* ribbon */
.ribbon {
  display: flex;
  border-bottom: 1px solid #d4d4d4;
}

.group {
  position: relative;
  display: grid;
  grid-template: 74px 18px / auto;
  padding: 3px 0 2px;
  flex: none;
}

.group::after {
  content: "";
  position: absolute;
  right: 0;
  top: 2px;
  bottom: 4px;
  border-right: 1px solid #d8d8d8;
}

.group h2 {
  text-align: center;
}

.group h2 .caret {
  margin-left: 6px;
  margin-right: 4px;
}

.tools {
  display: grid;
  grid-auto-rows: 23px;
  align-items: center;
}

.tools button {
  display: flex;
  align-items: center;
  gap: 3px;
}

.tools .caret {
  margin-left: 3px;
}

.tools button:disabled {
  color: #b0b0b0;
}

.tools button:disabled .caret {
  opacity: 0.5;
}

.g-select {
  width: 208px;
  grid-template-columns: 27px 1fr;
}

.g-select .tools { grid-template-columns: 98px auto; }
.g-select h2 { grid-column: 1 / 3; margin-right: 20px; padding-top: 2px; }

.big {
  text-align: left;
  padding-top: 8px;
}

.big .arrow {
  display: block;
  width: 14px;
  height: 22px;
  stroke: #1874e8;
  stroke-width: 2;
}

.big span {
  display: block;
  margin: 8px 0 0 -9px;
}

.g-draw { width: 194px; padding-left: 8px; }
.g-draw .tools { grid-template-columns: 79px auto; }
.g-common { width: 276px; padding-left: 8px; }
.g-common .tools { grid-template-columns: 67px 111px auto; }
.g-edit { width: 220px; padding-left: 8px; }
.g-edit .tools { grid-template-columns: 54px auto; }

/* option bar */
.options {
  display: flex;
  align-items: center;
  gap: 4px;
  background: #f0f0f0;
  overflow: hidden;
}

.options select {
  appearance: none;
  flex: none;
  width: 98px;
  height: 23px;
  padding-left: 2px;
  border: 1px solid #e0e0e0;
  border-radius: 3px;
  background:
    conic-gradient(from -45deg at 50% 100%, #555 90deg, transparent 0) right 4px top 10px / 6px 3px no-repeat,
    #fff;
}

.options .floor {
  margin-left: -22px;
}

.options label {
  display: flex;
  align-items: center;
  gap: 0;
  white-space: nowrap;
}

.options .opt-check {
  gap: 2px;
}

.options input[type="text"] {
  width: 79px;
  height: 22px;
  padding-left: 2px;
  border: 1px solid #e4e4e4;
  border-radius: 3px;
  background: #fff;
  color: #2b2f36;
}

.dim {
  color: #777;
}

.offset {
  border-left: 1px solid #ccc;
  padding-left: 5px;
}

/* panels */
main {
  display: grid;
  grid-template-columns: 187px 361px minmax(0, 1fr) 251px;
  gap: 4px;
  min-height: 0;
  background: #fff;
}

.panel {
  display: flex;
  flex-direction: column;
  min-height: 0;
  border: 1px solid #d0d0d0;
  background: #fff;
}

.strip {
  display: flex;
  justify-content: flex-end;
  flex: none;
  height: 11px;
  background: #e6e6e6;
  border-bottom: 1px solid #d4d4d4;
}

.x {
  color: #888;
  font-size: 16px;
  line-height: 10px;
  padding-right: 2px;
}

.nav {
  position: relative;
  border-left: 0;
  margin-bottom: 1px;
}

.nav-title {
  flex: none;
  height: 22px;
  padding-top: 3px;
  padding-right: 166px;
  display: flex;
  justify-content: flex-end;
  overflow: hidden;
  white-space: nowrap;
  background: #f0f0f0;
  border-bottom: 1px solid #d8d8d8;
  color: #666;
}

.nav-tools {
  display: flex;
  flex: none;
  justify-content: flex-end;
  gap: 4px;
  height: 28px;
  padding: 3px 1px 2px;
  border-bottom: 1px solid #d4d4d4;
}

.nav-tools button {
  display: grid;
  place-items: center;
  width: 24px;
  height: 22px;
  border-radius: 3px;
  background: #c3d9f1;
}

.nav-list {
  padding-top: 3px;
  overflow: hidden;
}

.nav-list li {
  display: flex;
  align-items: center;
  height: 24px;
}

.nav-list a {
  display: flex;
  align-items: center;
  gap: 6px;
  width: 140px;
  height: 22px;
  margin-left: 16px;
  padding-left: 3px;
  border-radius: 2px;
}

.nav-list .active {
  background: #c3d9f1;
}

.thumb {
  position: absolute;
  right: 3px;
  width: 8px;
  border-radius: 4px;
  background: #cbcbcb;
}

.nav .thumb {
  top: 53%;
  bottom: 5%;
}

.middle {
  position: relative;
  display: grid;
  grid-template-rows: 443px minmax(0, 1fr);
  gap: 4px;
  min-height: 0;
}

.tabs {
  display: flex;
  flex: none;
  height: 23px;
  background: #f0f0f0;
  border-bottom: 1px solid #d8d8d8;
}

.tabs button {
  width: 65px;
  background: #e0e0e0;
  border: 1px solid #c4c4c8;
  border-left: 0;
  color: #777;
}

.tabs .on {
  background: #f0f0f0;
  color: #2b2f36;
  font-weight: bold;
}

.bar {
  display: flex;
  flex: none;
  align-items: center;
  gap: 13px;
  height: 28px;
  padding-left: 4px;
  border-bottom: 1px solid #e0e0e0;
}

.bar button {
  display: flex;
  align-items: center;
  gap: 3px;
}

.bar .caret {
  margin: 0 -5px 0 5px;
}

.bar .more {
  margin-left: auto;
  margin-right: 2px;
  width: 11px;
  height: 20px;
  border: 1px solid #ddd;
  border-radius: 4px;
}

.more svg {
  flex: none;
  width: 8px;
  height: 6px;
  fill: #4d5566;
}

.search {
  display: flex;
  align-items: center;
  flex: none;
  height: 19px;
  border-bottom: 1px solid #e0e0e0;
}

.search input {
  flex: 1;
  border: 0;
  padding-left: 2px;
  height: 17px;
}

.search input::placeholder {
  color: #999;
}

.tree {
  padding: 3px 0 0 13px;
  line-height: 24px;
}

.tree .caret {
  margin: 0 4px 2px 0;
}

.tree ul {
  padding-left: 27px;
}

.picked {
  display: inline-block;
  height: 21px;
  padding: 0 4px;
  line-height: 20px;
  border-radius: 3px;
  background: #c3d9f1;
}

.handle {
  position: absolute;
  left: 361px;
  top: 392px;
  width: 4px;
  height: 100px;
  background: #5c6672;
}

/* grids */
.grid {
  table-layout: fixed;
  border-collapse: separate;
  border-spacing: 0;
}

.grid tr {
  height: 21px;
}

.grid th, .grid td {
  height: 21px;
  padding: 0 0 0 3px;
  border-right: 1px solid #d8d8d8;
  border-bottom: 1px solid #d8d8d8;
  font-weight: normal;
  text-align: left;
  line-height: 18px;
  white-space: nowrap;
  overflow: hidden;
}

.grid thead th {
  text-align: center;
  padding: 0;
}

.grid tbody th {
  background: #f0f0f0;
  text-align: center;
  padding: 0;
}

.grid .cur {
  background: #80bbfa;
  color: #fff;
  font-weight: bold;
  border-color: #62a4e6;
}

.grid td input[type="checkbox"] {
  margin: 0 auto;
}

.props .grid {
  width: 344px;
  margin-top: 1px;
}

.c-no { width: 22px; }
.c-name { width: 126px; }
.c-val { width: 155px; }
.c-add { width: 41px; }

.props td:last-child {
  padding: 0;
}

.blue {
  color: #0b5cff;
}

.exp {
  width: 13px;
  height: 13px;
  margin: 0 5px 0 0;
  border: 1px solid #888;
  border-radius: 2px;
  background: #fff;
  line-height: 10px;
  vertical-align: 1px;
}

.props .grid .leaf {
  padding-left: 31px;
  background:
    linear-gradient(#d8d8d8, #d8d8d8) 9px 0 / 1px 100% no-repeat,
    linear-gradient(#d8d8d8, #d8d8d8) 9px 10px / 16px 1px no-repeat;
}

.props .grid .last {
  background-size: 1px 11px, 16px 1px;
}

.props .grid .sel th {
  background: #80bbfa;
  color: #fff;
  font-weight: bold;
}

.grid .edit {
  padding: 0;
  border: 1px solid #5ba0e8;
  outline: 1px solid #5ba0e8;
  outline-offset: -2px;
}

.edit div {
  display: flex;
  align-items: center;
  padding: 0 4px;
}

.edit input {
  flex: 1;
  min-width: 0;
  height: 17px;
  border: 0;
  background: none;
}

.edit button {
  width: 16px;
  height: 13px;
  border: 1px solid #5ba0e8;
  border-radius: 2px;
  background: #eaf3fe;
  color: #1874e8;
  line-height: 10px;
  font-weight: bold;
}

.rebar {
  width: 11px;
  height: 10px;
  margin-right: 1px;
  fill: none;
  stroke: #222;
}

.prop-scroll {
  position: relative;
  flex: 1;
  min-height: 0;
  overflow: hidden;
  border-bottom: 1px solid #d0d0d0;
}

.prop-scroll .thumb {
  top: 14px;
  height: 218px;
}

.props {
  border-bottom: 0;
}

.foot {
  flex: none;
  height: 32px;
  padding: 4px 5px;
}

.btn {
  width: 80px;
  height: 24px;
  border: 1px solid #c0c0c0;
  border-radius: 4px;
  background: #fff;
}

/* model canvas */
.plan {
  width: 100%;
  height: 100%;
  display: block;
}

.plan .dg { fill: #008c46; }
.edge { fill: none; stroke: #00dc6e; }
.ye { fill: #ffff38; }
.ol { fill: #605f00; stroke: #8a8a10; }
.gr { fill: #2bdd2b; }
.gy { fill: #646464; }
.bl { fill: #3838ff; }
.ax { stroke: #aaa; }
.teal { stroke: #0a6a6a; }
.red { stroke: #e01010; }
.dred { stroke: #a00010; }
.col { fill: #5a5a5a; stroke: #a060e0; }
.mg { stroke: #f3f; stroke-width: 2; }
.pu { fill: #80f; stroke: #d22; }
.grid-green { fill: none; stroke: #007a00; }

.plan text {
  font-family: "Liberation Sans", "Noto Sans CJK SC", sans-serif;
}

.plan .mark text {
  fill: #fff;
  text-anchor: middle;
  font-family: "Noto Sans", sans-serif;
  font-size: 16px;
}

.plan .note text {
  fill: #fff;
  font-family: "Liberation Mono", "Noto Sans CJK SC", monospace;
  font-size: 12px;
}

.plan .note .salmon { fill: #ff7a5a; }
.len { fill: #2a9a00; font-size: 12px; }
.tag { fill: #f4f4f4; font-size: 14px; }
.gizmo { font-size: 14px; }

/* display settings */
.display {
  overflow: hidden;
  margin-bottom: 1px;
}

.display-title {
  flex: none;
  height: 22px;
  background: #f0f0f0;
  border-bottom: 1px solid #d8d8d8;
}

.display-space {
  flex: none;
  height: 27px;
  margin-bottom: 3px;
  border-bottom: 1px solid #c8c8c8;
}

.display-table {
  flex: 1;
  min-height: 0;
  margin-left: 2px;
  overflow: hidden;
  border: 1px solid #d0d0d0;
  border-right: 0;
}

.display .grid {
  width: 255px;
}

.d-gut { width: 9px; }
.d-name { width: 122px; }
.d-on { width: 63px; }
.d-label { width: 61px; }

.display .grid td:nth-child(n+3) {
  padding: 0;
}

.display .grid .leaf {
  padding-left: 32px;
  background:
    linear-gradient(#d8d8d8, #d8d8d8) 10px 0 / 1px 100% no-repeat,
    linear-gradient(#d8d8d8, #d8d8d8) 10px 10px / 16px 1px no-repeat;
}

.display .grid .last {
  background-size: 1px 11px, 16px 1px;
}

.display .foot {
  height: 38px;
  padding: 6px 0 0 180px;
}

.display .restore {
  width: 90px;
  height: 26px;
}

/* status bar */
.status {
  display: flex;
  align-items: flex-start;
  overflow: hidden;
  padding-top: 3px;
  background: #fafafa;
}

.status span {
  flex: none;
  padding-top: 4px;
}

.s1 { width: 82px; margin-left: 241px; }
.s2 { width: 236px; }
.s3 { width: 103px; }

.status button {
  flex: none;
  width: 25px;
  height: 20px;
  margin-right: 4px;
  border: 1px solid #999;
  border-radius: 3px;
  background: #fff;
}

.status .on {
  width: 36px;
  margin-right: 6px;
  border-color: #1874e8;
  background: #d6e6fa;
}

.status .wide {
  width: 36px;
}

.hint {
  margin-left: 4px;
  color: #b04a10;
}

/* parameter dialog */
.dialog {
  position: absolute;
  left: 783px;
  right: 49px;
  top: 22px;
  bottom: 146px;
  display: flex;
  flex-direction: column;
  padding: 0 11px 11px;
  border: 1px solid #b8b8b8;
  background: #fff;
}

.dialog-head {
  display: flex;
  justify-content: space-between;
  align-items: flex-start;
  flex: none;
  height: 59px;
  padding: 9px 1px 0 0;
}

.dialog-head h1 {
  font-size: 14px;
  line-height: 20px;
}

.dialog-head button {
  padding-top: 3px;
}

.dialog-head svg {
  display: block;
  width: 12px;
  height: 12px;
  stroke: #888;
}

.detail {
  flex: 1;
  min-height: 0;
  background: #000;
}

.wl {
  fill: none;
  stroke: #fff;
}

.detail text {
  font-family: "Liberation Serif", serif;
}

.spec {
  fill: #0f0;
  font-size: 24px;
}

.size {
  font-size: 32px;
}

/* input method badge */
.ime {
  position: absolute;
  right: 0;
  top: 922px;
  display: flex;
  align-items: center;
  width: 44px;
  height: 32px;
}

.ime svg {
  flex: none;
  width: 32px;
  height: 32px;
}

.ime-mode {
  flex: 1;
  height: 28px;
  background: linear-gradient(#0b6ee0, #0b6ee0) 6px 10px / 8px 9px no-repeat, #fff;
  border: solid #b8c8e0;
  border-width: 1px 0;
}
```
